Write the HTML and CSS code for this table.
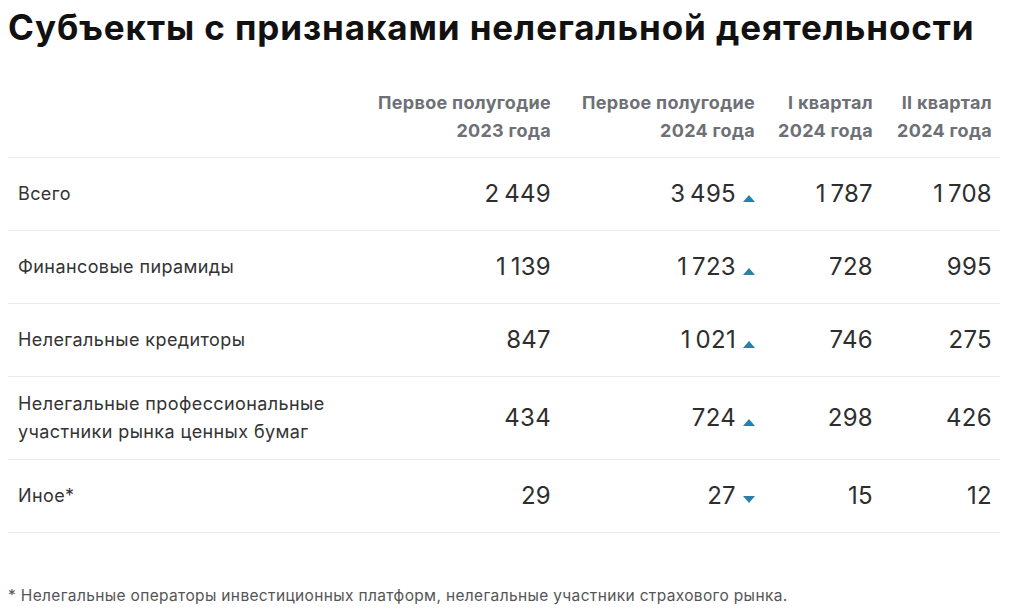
FILE: index.html
```html
<!DOCTYPE html>
<html lang="ru">
<head>
<meta charset="utf-8">
<title>Субъекты с признаками нелегальной деятельности</title>
<link rel="stylesheet" href="styles.css">
</head>
<body>
<main class="page">
  <h1 class="title">Субъекты с признаками нелегальной деятельности</h1>
  <table class="data">
    <colgroup>
      <col class="c-label"><col class="c-a"><col class="c-b"><col class="c-c"><col class="c-d">
    </colgroup>
    <thead>
      <tr>
        <th></th>
        <th>Первое полугодие<br>2023 года</th>
        <th>Первое полугодие<br>2024 года</th>
        <th>I квартал<br>2024 года</th>
        <th>II квартал<br>2024 года</th>
      </tr>
    </thead>
    <tbody>
      <tr>
        <td class="label">Всего</td>
        <td class="num">2&#8201;449</td>
        <td class="num trend"><span>3&#8201;495</span><i class="tri up"></i></td>
        <td class="num">1&#8201;787</td>
        <td class="num">1&#8201;708</td>
      </tr>
      <tr>
        <td class="label">Финансовые пирамиды</td>
        <td class="num">1&#8201;139</td>
        <td class="num trend"><span>1&#8201;723</span><i class="tri up"></i></td>
        <td class="num">728</td>
        <td class="num">995</td>
      </tr>
      <tr>
        <td class="label">Нелегальные кредиторы</td>
        <td class="num">847</td>
        <td class="num trend"><span>1&#8201;021</span><i class="tri up"></i></td>
        <td class="num">746</td>
        <td class="num">275</td>
      </tr>
      <tr>
        <td class="label">Нелегальные профессиональные<br>участники рынка ценных бумаг</td>
        <td class="num">434</td>
        <td class="num trend"><span>724</span><i class="tri up"></i></td>
        <td class="num">298</td>
        <td class="num">426</td>
      </tr>
      <tr>
        <td class="label">Иное*</td>
        <td class="num">29</td>
        <td class="num trend"><span>27</span><i class="tri down"></i></td>
        <td class="num">15</td>
        <td class="num">12</td>
      </tr>
    </tbody>
  </table>
  <p class="note">* Нелегальные операторы инвестиционных платформ, нелегальные участники страхового рынка.</p>
</main>
</body>
</html>
```

FILE: styles.css
```css
html, body {
  margin: 0;
  padding: 0;
  background: #fff;
}
.page {
  padding: 0 8px;
  font-family: Inter, "Liberation Sans", sans-serif;
  color: #333;
}
.title {
  margin: 0;
  font-weight: 700;
  font-size: 35px;
  line-height: 54px;
  color: #111;
  letter-spacing: 0.9px;
}
.data {
  margin-top: 35px;
  width: 992px;
  border-collapse: collapse;
  table-layout: fixed;
}
.c-label { width: 363px; }
.c-a { width: 188px; }
.c-b { width: 204px; }
.c-c { width: 118px; }
.c-d { width: 119px; }
.data th {
  font-weight: 700;
  font-size: 18px;
  line-height: 28px;
  letter-spacing: 0.3px;
  color: #6d7075;
  text-align: right;
  vertical-align: bottom;
  padding: 0 8px 12px 0;
  border-bottom: 1px solid #ebebeb;
}
.data td {
  height: 46px;
  padding: 13px 8px 13px 0;
  border-bottom: 1px solid #ebebeb;
  vertical-align: middle;
}
.data td.label {
  padding-left: 10px;
  font-size: 18px;
  line-height: 28px;
  letter-spacing: 0.4px;
  color: #333;
}
.data td.num {
  text-align: right;
  font-size: 24px;
  line-height: 28px;
  letter-spacing: 0.3px;
  color: #2e2e2e;
}
.tri {
  display: inline-block;
  width: 0;
  height: 0;
  margin-left: 7px;
  border-left: 6px solid transparent;
  border-right: 6px solid transparent;
  vertical-align: middle;
}
.tri.up {
  border-bottom: 7px solid #2a80a8;
  position: relative;
  top: 3px;
}
.tri.down {
  border-top: 7px solid #2a80a8;
  position: relative;
  top: 2px;
}
.note {
  margin: 53px 0 0;
  font-size: 15.5px;
  line-height: 20px;
  letter-spacing: 0.35px;
  color: #555;
}
```
